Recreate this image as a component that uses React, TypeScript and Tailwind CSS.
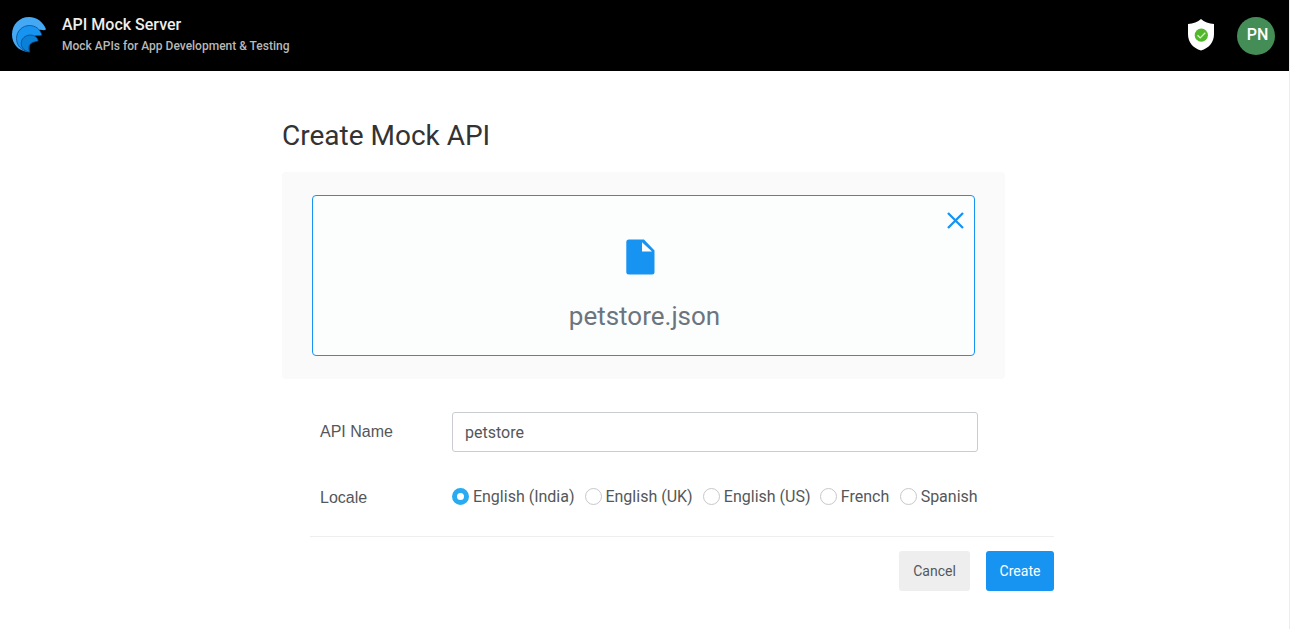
import { useState } from 'react';

const locales = [
  { label: 'English (India)', width: 'w-[132.5px]' },
  { label: 'English (UK)', width: 'w-[118.4px]' },
  { label: 'English (US)', width: 'w-[117px]' },
  { label: 'French', width: 'w-[79.8px]' },
  { label: 'Spanish', width: 'w-[80px]' },
];

function WaveLogo() {
  return (
    <svg className="h-[36px] w-[36px]" viewBox="0 0 36 36">
      <path d="M17 35C7 34 1 26.500 1 17.500C1 7.500 8.500 0 18 0C26 0 32.500 5.500 35 12.300C34 13.500 32 13.200 29.500 12.800L22 13.500L15 30Z" fill="#44a8f5" />
      <path d="M18 35C10 33.500 5.500 28 5.500 21.500C5.500 14 11.500 8.500 18.500 8.500C24.500 8.500 29 12 30.800 17.800C29.500 19 27 18.800 24.500 18.700L19 22Z" fill="#1793f2" stroke="#0a4478" strokeWidth="0.7" />
      <path d="M19 35C14 34.500 10.200 31 10.200 26.500C10.200 21.500 14.500 18 19.500 18C23.500 18 26.300 20.300 27.200 23.600C26 25 22.500 24.300 20 26.500C17 29.200 17.200 32 19 35Z" fill="#0b80d8" stroke="#0a4478" strokeWidth="0.7" />
    </svg>
  );
}

function Header() {
  return (
    <header className="flex h-[71px] items-start bg-black pr-[14px] pl-[11px]">
      <div className="mt-[17px]"><WaveLogo /></div>
      <div className="ml-[15px] font-medium">
        <div className="mt-[15px] text-[16px] leading-[20px] text-[#eeeeee]">API Mock Server</div>
        <div className="mt-[2px] text-[12px] leading-[18px] text-[#b8b8b8]">Mock APIs for App Development &amp; Testing</div>
      </div>
      <svg className="mt-[19px] ml-auto h-[32px] w-[28px]" viewBox="0 0 28 32">
        <path d="M14 0C11 3 6 4.800 1 5V15C1 23.500 6 29 14 31.500C22 29 27 23.500 27 15V5C22 4.800 17 3 14 0Z" fill="white" />
        <circle cx="14.300" cy="16.200" r="6.600" fill="#52b82b" />
        <path d="M10.500 16.300L13.200 18.900L18.300 13.800" fill="none" stroke="#d8f3cf" strokeWidth="1.300" />
      </svg>
      <div className="mt-[17px] ml-[22px] flex h-[38px] w-[38px] items-center justify-center rounded-full bg-[#448d56] pb-[2px] pl-[3px] text-[16px] font-medium text-white">
        PN
      </div>
    </header>
  );
}

function UploadBox() {
  return (
    <section className="h-[207px] rounded bg-[#fafafa] px-[30px] pt-[23px]">
      <div className="relative flex h-[161px] flex-col items-center rounded border border-[#1793f2] bg-[#fcfefe]">
        <button className="absolute top-[16px] right-[10px]" aria-label="Remove file">
          <svg className="block h-[18px] w-[17px]" viewBox="0 0 17 18">
            <path d="M1 1L16 16M16 1L1 16" stroke="#1793f2" strokeWidth="2.300" />
          </svg>
        </button>
        <svg className="mt-[43px] mr-[7px] h-[36px] w-[29px]" viewBox="0 0 29 36">
          <path fillRule="evenodd" d="M3 0.500H18L28.500 11.500V33Q28.500 35.500 26 35.500H3Q0.300 35.500 0.300 33V3Q0.300 0.500 3 0.500ZM16 3.300V12.500H26Z" fill="#1793f2" />
        </svg>
        <div className="mt-[23px] pl-[2px] text-[26px] leading-[36px] text-[#6c757d]">petstore.json</div>
      </div>
    </section>
  );
}

export default function App() {
  const [name, setName] = useState('petstore');
  const [locale, setLocale] = useState('English (India)');
  return (
    <div className="min-h-[629px] w-full border-r border-[#ececec] bg-white font-[Roboto,sans-serif] text-[#54575a]">
      <Header />
      <main className="ml-[282px] w-[772px]">
        <h1 className="pt-[47px] text-[28px] leading-[36px] text-[#333333]">Create Mock API</h1>
        <div className="mt-[18px] w-[723px]"><UploadBox /></div>
        <div className="mt-[33px] flex h-[40px] items-center pl-[38px]">
          <label htmlFor="api-name" className="w-[132px] font-['Liberation_Sans',sans-serif] text-[16px]">API Name</label>
          <input
            id="api-name"
            value={name}
            onChange={(event) => setName(event.target.value)}
            className="h-[40px] w-[526px] rounded-[3px] border border-[#c9ccd0] bg-white px-[12px] text-[16px] text-[#54575a] outline-none"
          />
        </div>
        <div className="mt-[33px] flex h-[24px] items-center pl-[38px]">
          <div className="w-[132px] shrink-0 pt-px font-['Liberation_Sans',sans-serif] text-[16px]">Locale</div>
          {locales.map(({ label, width }) => (
            <label key={label} className={`flex shrink-0 items-center gap-[3.95px] text-[16px] whitespace-nowrap ${width}`}>
              <input
                type="radio"
                name="locale"
                checked={locale === label}
                onChange={() => setLocale(label)}
                className="mb-px h-[17px] w-[17px] shrink-0 appearance-none rounded-full border border-[#c8c8c8] bg-white checked:border-[5px] checked:border-[#29abf2]"
              />
              {label}
            </label>
          ))}
        </div>
        <div className="mt-[27px] ml-[28px] flex justify-end gap-[16px] border-t border-[#eeeeee] pt-[14px] text-[14px]">
          <button className="h-[40px] w-[71px] rounded-[3px] bg-[#eeeeee]">Cancel</button>
          <button className="h-[40px] w-[68px] rounded-[3px] bg-[#1793f2] text-white">Create</button>
        </div>
      </main>
    </div>
  );
}
